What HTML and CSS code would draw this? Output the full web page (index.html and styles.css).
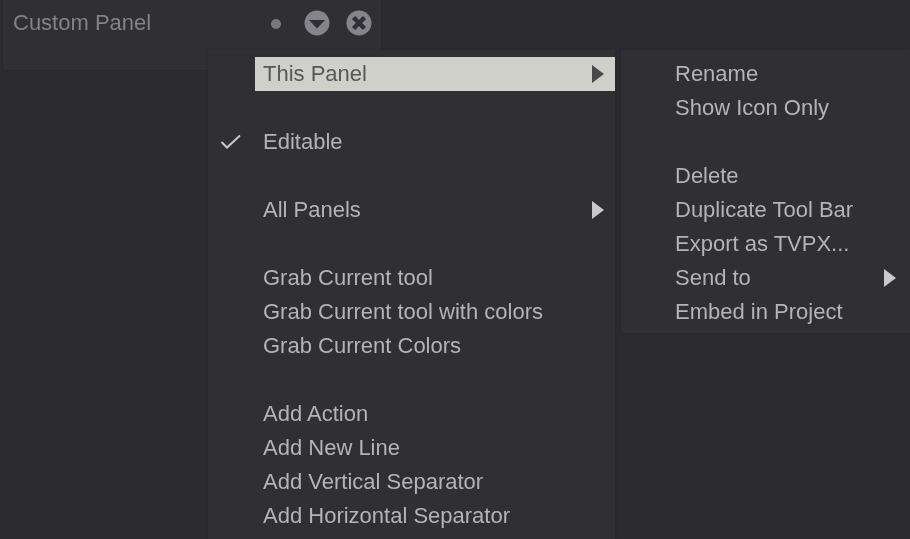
FILE: index.html
```html
<!DOCTYPE html>
<html lang="en">
<head>
<meta charset="utf-8">
<title>Custom Panel</title>
<link rel="stylesheet" href="styles.css">
</head>
<body>
<div class="screen">
  <header class="panel">
    <span class="panel-title">Custom Panel</span>
    <div class="panel-icons">
      <span class="dot"></span>
      <svg class="icon" viewBox="0 0 26 26"><circle cx="13" cy="13" r="12.5" fill="#85848a"/><path d="M5 10h16l-8 8.500z" fill="#2f2e33"/></svg>
      <svg class="icon" viewBox="0 0 26 26"><circle cx="13" cy="13" r="12.500" fill="#85848a"/><path d="M7.500 7.500l11 11M18.500 7.500l-11 11" stroke="#2f2e33" stroke-width="4.500" fill="none"/></svg>
    </div>
  </header>
  <nav class="menu main-menu">
    <div class="item active">This Panel<span class="arrow"></span></div>
    <div class="item"></div>
    <div class="item"><svg class="check" viewBox="0 0 22 16"><path d="M1.500 8l5.500 5.500L20 1.500" stroke="#c9c9c9" stroke-width="2" fill="none"/></svg>Editable</div>
    <div class="item"></div>
    <div class="item">All Panels<span class="arrow"></span></div>
    <div class="item"></div>
    <div class="item">Grab Current tool</div>
    <div class="item">Grab Current tool with colors</div>
    <div class="item">Grab Current Colors</div>
    <div class="item"></div>
    <div class="item">Add Action</div>
    <div class="item">Add New Line</div>
    <div class="item">Add Vertical Separator</div>
    <div class="item">Add Horizontal Separator</div>
  </nav>
  <nav class="menu sub-menu">
    <div class="item">Rename</div>
    <div class="item">Show Icon Only</div>
    <div class="item"></div>
    <div class="item">Delete</div>
    <div class="item">Duplicate Tool Bar</div>
    <div class="item">Export as TVPX...</div>
    <div class="item">Send to<span class="arrow"></span></div>
    <div class="item">Embed in Project</div>
  </nav>
</div>
</body>
</html>
```
FILE: styles.css
```css
* { box-sizing: border-box; }
html, body { margin: 0; height: 100%; overflow: hidden; background: #2c2b30; }
.screen {
  position: relative;
  width: 910px;
  height: 539px;
  overflow: hidden;
  background: #2c2b30;
  font-family: "Liberation Sans", Arial, sans-serif;
  font-size: 22px;
  color: #b4b4b6;
  filter: blur(0.7px);
}
.panel {
  width: 380px;
  height: 71px;
  margin-left: 2px;
  padding: 10px 9px 0 10px;
  display: flex;
  align-items: flex-start;
  justify-content: space-between;
  background: #302f34;
  border-right: 1px solid #29282d;
  border-bottom: 1px solid #29282d;
  border-left: 1px solid #29282d;
}
.panel-title { color: #838387; line-height: 26px; }
.panel-icons { display: flex; align-items: center; gap: 16px; height: 26px; }
.dot { width: 10px; height: 10px; margin-top: 1px; margin-right: 7px; border-radius: 50%; background: #79787e; }
.icon { width: 26px; height: 26px; display: block; }
.menu {
  position: absolute;
  background: #302f34;
  box-shadow: 0 0 2px #29282d;
}
.main-menu { left: 208px; top: 50px; width: 407px; height: 489px; padding: 7px 0 0 47px; }
.sub-menu { left: 621px; top: 50px; width: 289px; height: 283px; padding: 7px 0 0 54px; }
.item {
  position: relative;
  height: 34px;
  line-height: 33px;
  padding-left: 8px;
  white-space: nowrap;
}
.sub-menu .item { padding-left: 0; }
.active {
  background: #cfd0ca;
  color: #57565a;
}
.arrow {
  position: absolute;
  right: 11px;
  top: 8px;
  width: 0;
  height: 0;
  border-left: 12px solid #c9c9c9;
  border-top: 9px solid transparent;
  border-bottom: 9px solid transparent;
}
.active .arrow { border-left-color: #4a494c; }
.sub-menu .arrow { right: 14px; }
.check {
  position: absolute;
  left: -35px;
  top: 9px;
  width: 22px;
  height: 16px;
}
```
